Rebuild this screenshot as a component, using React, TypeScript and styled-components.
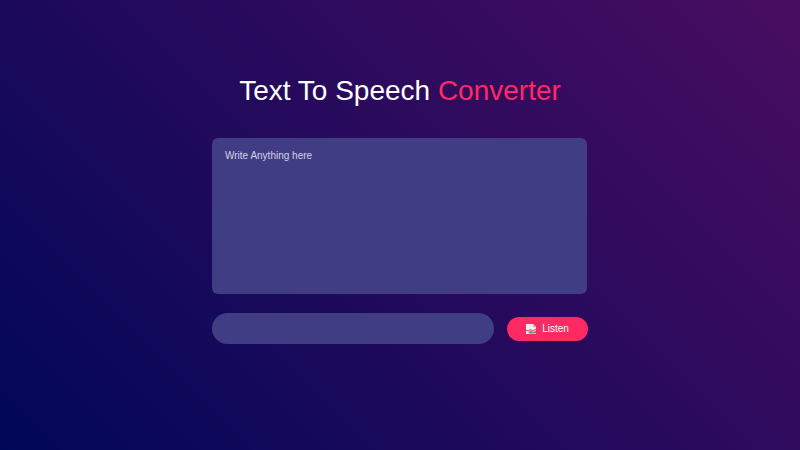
import React from 'react';
import styled, { createGlobalStyle } from 'styled-components';

const GlobalStyle = createGlobalStyle`
  * {
    box-sizing: border-box;
  }

  body {
    margin: 0;
    font-family: "Liberation Sans", Arial, sans-serif;
  }
`;

const Hero = styled.div`
  display: flex;
  flex-direction: column;
  align-items: center;
  width: 100%;
  height: 100vh;
  padding-top: 73px;
  background: linear-gradient(45deg, #010758, #490d61);
  color: #fff;
`;

const Title = styled.h1`
  margin: 0 0 29px;
  font-size: 28px;
  line-height: 36px;
  font-weight: 400;

  span {
    color: #ff2963;
  }
`;

const Panel = styled.div`
  width: 376px;
`;

const Message = styled.textarea`
  display: block;
  width: 375px;
  height: 156px;
  padding: 12px 13px 11px;
  border: 0;
  outline: 0;
  border-radius: 6px;
  resize: none;
  background: #403d84;
  color: #fff;
  font-family: inherit;
  font-size: 10px;
  line-height: 12px;

  &::placeholder {
    color: #d4d3e2;
    opacity: 1;
  }
`;

const Controls = styled.div`
  display: flex;
  align-items: center;
  gap: 13px;
  margin-top: 19px;
`;

const VoiceSelect = styled.select`
  flex: 1;
  height: 31px;
  padding: 0 12px;
  border: 0;
  outline: 0;
  border-radius: 16px;
  appearance: none;
  background: #403d84;
  color: #fff;
  font-family: inherit;
  font-size: 10px;
`;

const ListenButton = styled.button`
  display: flex;
  align-items: center;
  justify-content: center;
  gap: 6px;
  width: 81px;
  height: 24px;
  padding: 0;
  border: 0;
  border-radius: 12px;
  background: #ff2963;
  color: #fff;
  font-family: inherit;
  font-size: 10px;
  cursor: pointer;
`;

// the reference shows the browser's broken-image placeholder here
const BrokenImage = () => (
  <svg width="10" height="10" viewBox="0 0 10 10" aria-hidden="true">
    <path d="M0 0H7L10 3V4.5L7 6.5L4.5 5L2 6.5L0 5.5Z" fill="#eceef2" />
    <path d="M7 0L10 3H7Z" fill="#ff9ab5" />
    <path d="M0 6.5L2 7.5L4.5 6L7 7.5L10 5.5V10H0Z" fill="#f1f3f4" />
    <path d="M2.5 8L5 6.5L7 8L10 6.5V9.5H2.5Z" fill="#5aa36b" />
  </svg>
);

export default function App() {
  return (
    <>
      <GlobalStyle />
      <Hero>
        <Title>
          Text To Speech <span>Converter</span>
        </Title>
        <Panel>
          <Message placeholder="Write Anything here" />
          <Controls>
            <VoiceSelect />
            <ListenButton>
              <BrokenImage />
              Listen
            </ListenButton>
          </Controls>
        </Panel>
      </Hero>
    </>
  );
}
